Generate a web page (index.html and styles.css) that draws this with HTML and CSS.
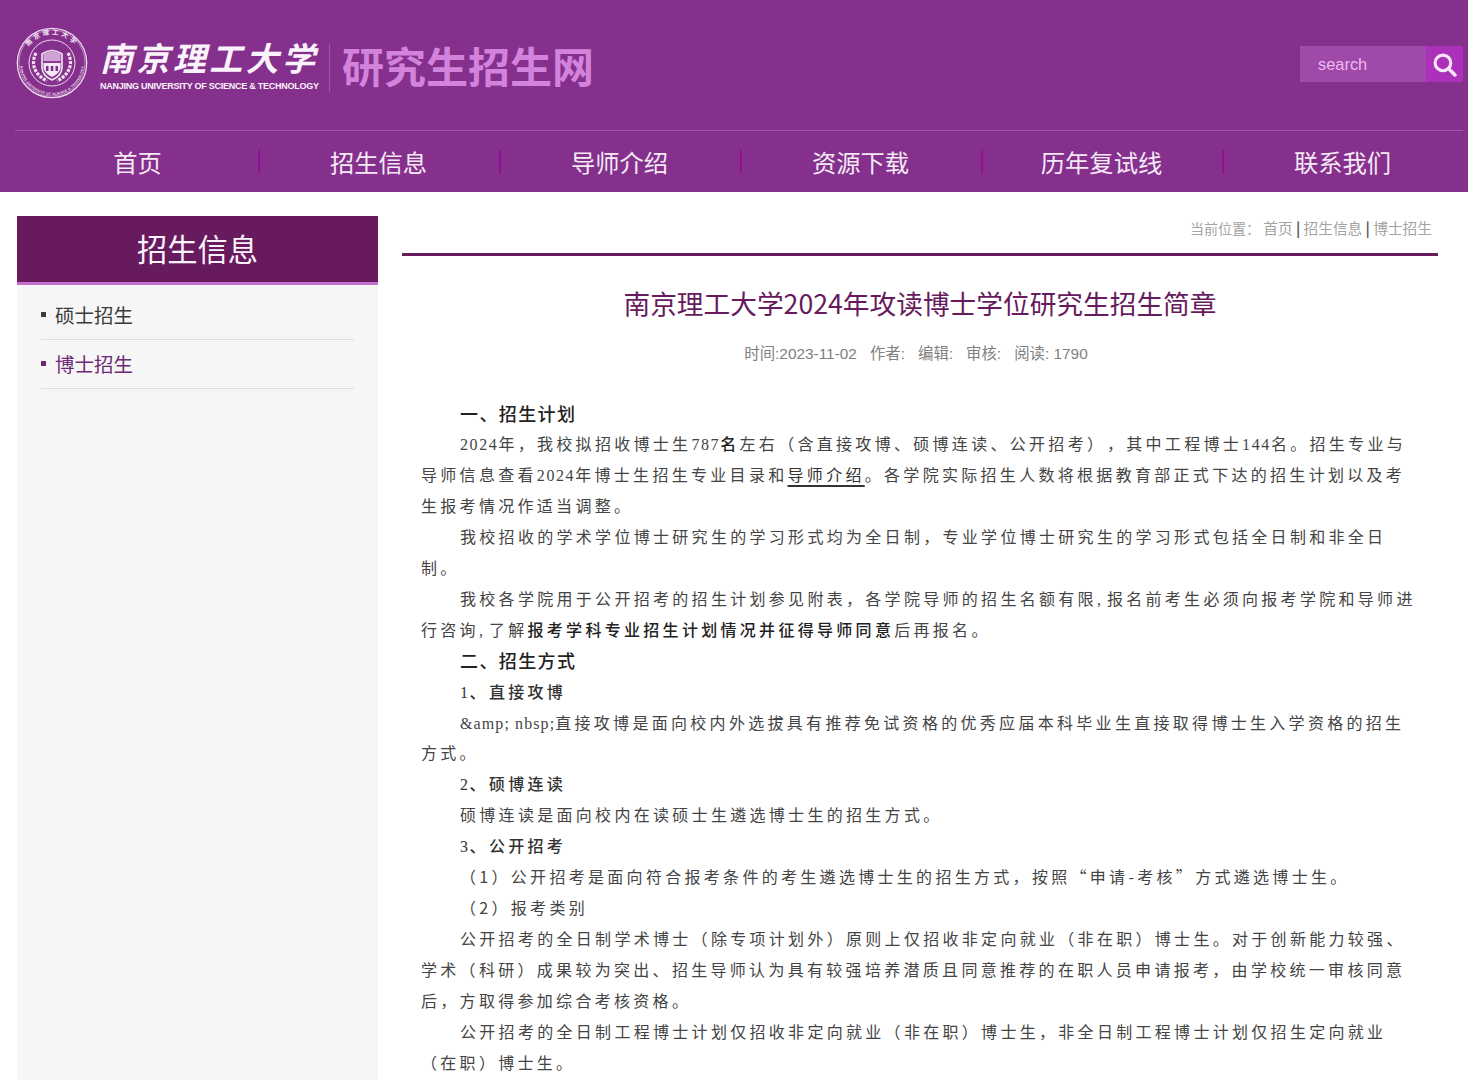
FILE: index.html
```html
<!DOCTYPE html>
<html lang="zh-CN">
<head>
<meta charset="utf-8">
<title>南京理工大学研究生招生网</title>
<link rel="stylesheet" href="styles.css">
</head>
<body>
<header class="site-header">
  <div class="brand-row">
    <a class="brand" href="#">
      <svg class="seal" viewBox="0 0 72 72" aria-hidden="true">
        <defs>
          <path id="sealTop" d="M7.500 36a28.500 28.500 0 0 1 57 0"/>
          <path id="sealBottom" d="M4 36a32 32 0 0 0 64 0"/>
        </defs>
        <circle cx="36" cy="36" r="34.700" fill="none" stroke="#eed9ee" stroke-width="1.300"/>
        <circle cx="36" cy="36" r="33" fill="none" stroke="#eed9ee" stroke-width=".5"/>
        <circle cx="36" cy="36" r="23" fill="none" stroke="#eed9ee" stroke-width="1"/>
        <text class="seal-top"><textPath href="#sealTop" startOffset="50%" text-anchor="middle">南京理工大学</textPath></text>
        <text class="seal-bottom"><textPath href="#sealBottom" startOffset="50%" text-anchor="middle">NANJING UNIVERSITY OF SCIENCE &amp; TECHNOLOGY</textPath></text>
        <path d="M20 26c-5 9-3 21 11 28M52 26c5 9 3 21-11 28" fill="none" stroke="#f2e4f2" stroke-width="3.200" stroke-dasharray="3 1.200"/>
        <path d="M26 27q10-7 20 0v13q0 9-10 13q-10-4-10-13z" fill="#8b3a93" stroke="#f4e8f4" stroke-width="1.600"/>
        <path d="M27.500 27q8.500-5 17 0v7h-17z" fill="#cfa3d4"/>
        <path d="M27.500 36h17v5q-1.500 6-8.500 9q-7-3-8.500-9z" fill="#f4e8f4"/>
        <path d="M30 39h2.500v5H30zM34.800 39h2.500v5h-2.500zM39.500 39H42v5h-2.500z" fill="#7d2d88"/>
      </svg>
      <span class="wordmark">
        <span class="wordmark-cn">南京理工大学</span>
        <span class="wordmark-en">NANJING UNIVERSITY OF SCIENCE &amp; TECHNOLOGY</span>
      </span>
      <span class="brand-divider"></span>
      <span class="site-name">研究生招生网</span>
    </a>
    <form class="search">
      <span class="search-input">search</span>
      <span class="search-btn">
        <svg viewBox="0 0 24 24" width="25" height="25" aria-hidden="true">
          <circle cx="10.500" cy="10.500" r="7.500" fill="none" stroke="#f6e6f6" stroke-width="3"/>
          <path d="M16 16l6 6" stroke="#f6e6f6" stroke-width="3.400" stroke-linecap="round"/>
        </svg>
      </span>
    </form>
  </div>
  <nav class="main-nav">
    <a href="#">首页</a>
    <a href="#">招生信息</a>
    <a href="#">导师介绍</a>
    <a href="#">资源下载</a>
    <a href="#">历年复试线</a>
    <a href="#">联系我们</a>
  </nav>
</header>
<div class="page">
  <aside class="sidebar">
    <h2 class="side-title">招生信息</h2>
    <ul class="side-list">
      <li><a href="#">硕士招生</a></li>
      <li class="active"><a href="#">博士招生</a></li>
    </ul>
  </aside>
  <main class="content">
    <div class="crumbs"><span class="crumbs-label">当前位置：</span> 首页 <b>|</b> 招生信息 <b>|</b> 博士招生</div>
    <h1 class="article-title">南京理工大学2024年攻读博士学位研究生招生简章</h1>
    <div class="meta"><span>时间:2023-11-02</span><span>作者:</span><span>编辑:</span><span>审核:</span><span>阅读: 1790</span></div>
    <article class="article">
      <p class="strong">一、招生计划</p>
      <p><span class="num">2024</span>年，我校拟招收博士生<span class="num">787</span><b>名</b>左右（含直接攻博、硕博连读、公开招考<span class="wide">）</span>，其中工程博士<span class="num">144</span>名。招生专业与<br>导师信息查看<span class="num">2024</span>年博士生招生专业目录和<u>导师介绍</u>。各学院实际招生人数将根据教育部正式下达的招生计划以及考<br>生报考情况作适当调整。</p>
      <p>我校招收的学术学位博士研究生的学习形式均为全日制，专业学位博士研究生的学习形式包括全日制和非全日<br>制。</p>
      <p>我校各学院用于公开招考的招生计划参见附表，各学院导师的招生名额有限<span class="num comma">,</span>报名前考生必须向报考学院和导师进<br>行咨询<span class="num comma">,</span>了解<b>报考学科专业招生计划情况并征得导师同意</b>后再报名。</p>
      <p class="strong">二、招生方式</p>
      <p class="medium"><span class="num">1</span>、直接攻博</p>
      <p><span class="num entity">&amp;amp; nbsp;</span>直接攻博是面向校内外选拔具有推荐免试资格的优秀应届本科毕业生直接取得博士生入学资格的招生<br>方式。</p>
      <p class="medium"><span class="num">2</span>、硕博连读</p>
      <p>硕博连读是面向校内在读硕士生遴选博士生的招生方式。</p>
      <p class="medium"><span class="num">3</span>、公开招考</p>
      <p>（1）公开招考是面向符合报考条件的考生遴选博士生的招生方式，按照“申请-考核”方式遴选博士生。</p>
      <p>（2）报考类别</p>
      <p>公开招考的全日制学术博士（除专项计划外）原则上仅招收非定向就业（非在职）博士生。对于创新能力较强、<br>学术（科研）成果较为突出、招生导师认为具有较强培养潜质且同意推荐的在职人员申请报考，由学校统一审核同意<br>后，方取得参加综合考核资格。</p>
      <p>公开招考的全日制工程博士计划仅招收非定向就业（非在职）博士生，非全日制工程博士计划仅招生定向就业<br>（在职）博士生。</p>
    </article>
  </main>
</div>
</body>
</html>
```
FILE: styles.css
```css
* { box-sizing: border-box; }
html, body { margin: 0; height: 1080px; overflow: hidden; }
body {
  display: flex;
  flex-direction: column;
  background: #fff;
  font-family: "Liberation Sans", "Noto Sans CJK SC", sans-serif;
  color: #333;
}
a { color: inherit; text-decoration: none; }

.site-header { background: #85308c; height: 192px; flex: none; }
.brand-row {
  height: 131px;
  margin: 0 5px 0 15px;
  border-bottom: 1px solid #a654ad;
  display: flex;
  align-items: flex-start;
  justify-content: space-between;
}
.brand { display: flex; align-items: flex-start; padding-top: 27px; }
.seal { width: 72px; height: 72px; margin-left: 1px; flex: none; }
.seal-top { font-family: "Noto Sans CJK SC", sans-serif; font-size: 6.500px; font-weight: 700; letter-spacing: 2.600px; fill: #f4e8f4; }
.seal-bottom { font-family: "Liberation Sans", sans-serif; font-size: 3.200px; font-weight: 700; letter-spacing: .3px; fill: #f4e8f4; }
.wordmark { display: flex; flex-direction: column; width: 219px; margin-left: 12px; color: #fbf3fb; }
.wordmark-cn {
  font-family: "Noto Sans CJK SC", sans-serif;
  font-weight: 700;
  font-style: italic;
  font-size: 33px;
  line-height: 42px;
  margin-top: 9px;
  letter-spacing: 3.400px;
  white-space: nowrap;
}
.wordmark-en {
  font-family: "Liberation Sans", sans-serif;
  font-weight: 700;
  font-size: 9px;
  line-height: 12px;
  margin-top: 2px;
  letter-spacing: -.25px;
  white-space: nowrap;
}
.brand-divider { width: 1px; height: 48px; background: #a654ad; margin: 17px 0 0 10px; }
.site-name {
  font-family: "Noto Sans CJK SC", sans-serif;
  font-weight: 700;
  font-size: 42px;
  line-height: 50px;
  margin: 13px 0 0 12px;
  color: #d283dc;
}
.search { display: flex; margin-top: 46px; height: 36px; }
.search-input {
  width: 126px;
  background: #9f49a8;
  color: #eebcf2;
  font-size: 16.400px;
  line-height: 37px;
  padding-left: 18px;
}
.search-btn {
  width: 37px;
  background: #ad30bb;
  display: flex;
  align-items: center;
  justify-content: center;
}

.main-nav { display: flex; margin-left: 19px; height: 61px; padding-top: 19px; }
.main-nav a {
  width: 241px;
  height: 24px;
  line-height: 23px;
  padding-right: 2px;
  text-align: center;
  font-size: 24.300px;
  color: #f4e9f5;
  border-right: 2px solid #95108f;
  font-family: "Noto Sans CJK SC", sans-serif;
  font-weight: 400;
}
.main-nav a:last-child { border-right-color: transparent; }

.page { flex: 1; display: flex; padding: 24px 30px 0 17px; gap: 24px; min-height: 0; }
.sidebar { width: 361px; flex: none; background: #f6f6f6; }
.side-title {
  margin: 0;
  height: 69px;
  background: #671a5e;
  border-bottom: 3px solid #c56ecb;
  color: #fbf2fb;
  text-align: center;
  font-family: "Noto Sans CJK SC", sans-serif;
  font-weight: 400;
  font-size: 30.300px;
  line-height: 64px;
}
.side-list { list-style: none; margin: 0 24px; padding: 6px 0 0; }
.side-list li {
  height: 49px;
  border-bottom: 1px solid #dcdcdc;
  display: flex;
  align-items: center;
  gap: 9px;
  font-size: 19.500px;
  color: #3c3c3c;
  font-family: "Noto Sans CJK SC", sans-serif;
  font-weight: 400;
  padding-bottom: 2px;
}
.side-list li::before { content: ""; width: 5px; height: 5px; background: currentColor; }
.side-list li.active { color: #6f2a75; }

.content { flex: 1; min-width: 0; }
.crumbs {
  height: 37px;
  text-align: right;
  padding-right: 6px;
  font-family: "Noto Sans CJK SC", sans-serif;
  font-weight: 400;
  font-size: 14.700px;
  line-height: 23px;
  color: #a3a3a3;
}
.crumbs-label { font-size: 14px; }
.crumbs b { color: #555; font-weight: 700; }
.article-title {
  margin: 0;
  border-top: 3px solid #671a5e;
  padding-top: 27px;
  text-align: center;
  font-family: "Noto Sans CJK SC", sans-serif;
  font-weight: 400;
  font-size: 26.700px;
  line-height: 40px;
  color: #671a5e;
}
.meta {
  display: flex;
  justify-content: center;
  gap: 13px;
  margin-top: 20px;
  padding-right: 8px;
  font-family: "Liberation Sans", "Noto Sans CJK SC", sans-serif;
  font-size: 15.400px;
  line-height: 22px;
  color: #808080;
}
.article {
  margin: 32.500px 0 0 19px;
  font-family: "Noto Sans CJK SC", serif;
  font-weight: 400;
  font-size: 16px;
  line-height: 30.900px;
  letter-spacing: 3.300px;
  color: #444;
  white-space: nowrap;
}
.article p { margin: 0; text-indent: 39px; }
.article .num { font-family: "Liberation Serif", serif; letter-spacing: 1.600px; line-height: 1; }
.article .comma { letter-spacing: 6px; }
.article .entity { letter-spacing: 1.100px; }
.article .wide { letter-spacing: 12px; }
.article .strong { font-weight: 500; font-size: 18px; letter-spacing: 1.400px; color: #222; }
.article .medium { font-weight: 500; color: #333; }
.article b { font-weight: 500; color: #222; }
.article u { text-underline-offset: 4px; text-decoration-thickness: 1.500px; color: #333; }
```
